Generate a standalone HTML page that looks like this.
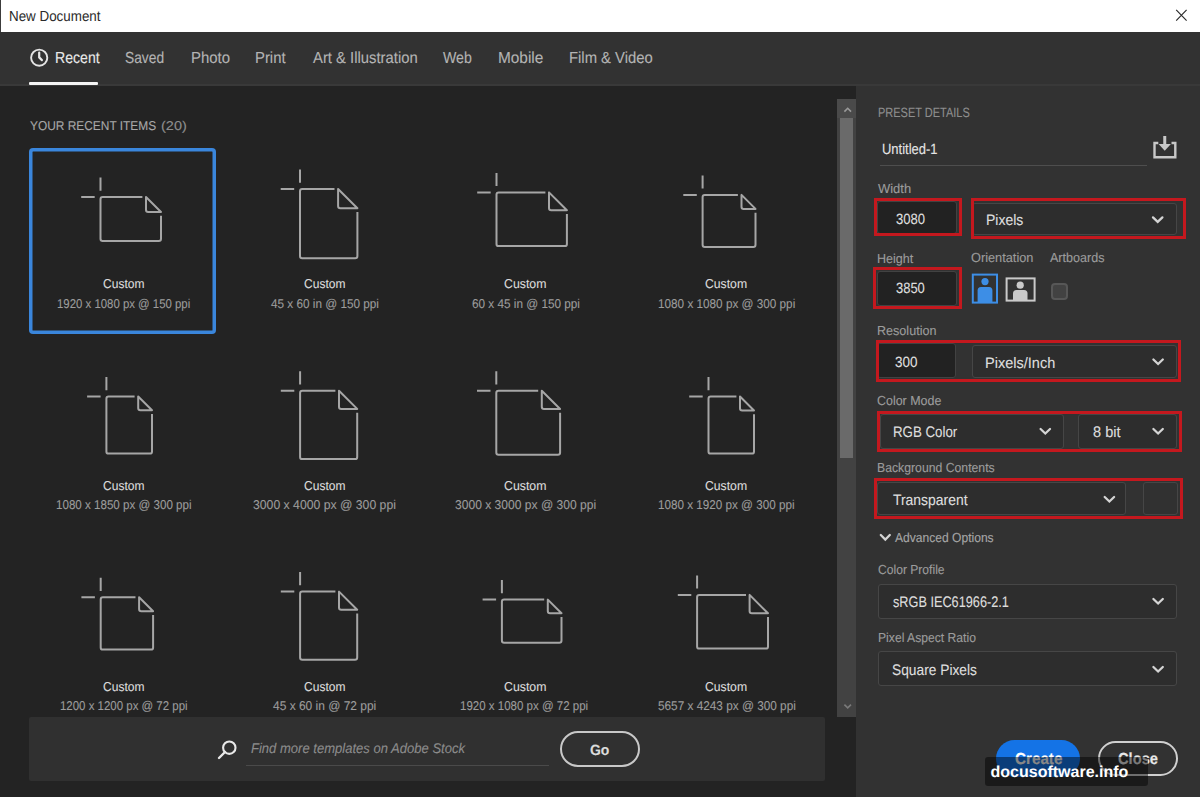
<!DOCTYPE html>
<html><head><meta charset="utf-8"><style>
html,body{margin:0;padding:0;width:1200px;height:797px;overflow:hidden;background:#232323;}
body{position:relative;font-family:"Liberation Sans",sans-serif;}
.t{position:absolute;white-space:nowrap;transform-origin:0 0;text-rendering:geometricPrecision;-webkit-text-stroke:0.12px currentColor;}
.bm{display:inline-block;width:0;height:0;vertical-align:baseline;}
.r{position:absolute;}
.s{position:absolute;overflow:visible;}
</style></head><body>
<div class="r" style="left:0.00px;top:0.00px;width:1200.00px;height:32.00px;background:#ffffff;"></div>
<div class="r" style="left:0.00px;top:0.00px;width:1.00px;height:32.00px;background:#3c3c3c;"></div>
<div class="t" style="left:9.03px;top:9.51px;font-size:14.53px;line-height:14.53px;color:#2a2a2a;font-weight:normal;font-style:normal;transform:scaleX(0.9224);-webkit-text-stroke:0;">New Document</div>
<svg class="s" style="left:1170px;top:4px" width="22" height="22" viewBox="1170 4 22 22"><path d="M1176.2 9.9 L1186.6 20.6 M1186.6 9.9 L1176.2 20.6" stroke="#2a2a2a" stroke-width="1.15" fill="none"/></svg>
<div class="r" style="left:0.00px;top:32.00px;width:1200.00px;height:52.00px;background:#323232;"></div>
<div class="r" style="left:0.00px;top:84.00px;width:1200.00px;height:2.00px;background:#393939;"></div>
<div class="r" style="left:29.00px;top:82.00px;width:68.80px;height:3.00px;background:#f4f4f4;border-radius:1px;"></div>
<svg class="s" style="left:28px;top:46px" width="22" height="22" viewBox="28 46 22 22"><circle cx="39.2" cy="57.7" r="8.1" stroke="#e4e4e4" stroke-width="1.9" fill="none"/><path d="M39.2 52.6 V57.4 L41.9 60.1" stroke="#e8e8e8" stroke-width="2.2" stroke-linecap="round" stroke-linejoin="round" fill="none"/></svg>
<div class="t" style="left:54.87px;top:51.11px;font-size:15.99px;line-height:15.99px;color:#e8e8e8;font-weight:normal;font-style:normal;transform:scaleX(0.8813);">Recent</div>
<div class="t" style="left:124.98px;top:51.11px;font-size:15.99px;line-height:15.99px;color:#b4b4b4;font-weight:normal;font-style:normal;transform:scaleX(0.8630);">Saved</div>
<div class="t" style="left:190.80px;top:51.11px;font-size:15.99px;line-height:15.99px;color:#b4b4b4;font-weight:normal;font-style:normal;transform:scaleX(0.9344);">Photo</div>
<div class="t" style="left:255.01px;top:51.11px;font-size:15.99px;line-height:15.99px;color:#b4b4b4;font-weight:normal;font-style:normal;transform:scaleX(0.9302);">Print</div>
<div class="t" style="left:312.50px;top:51.11px;font-size:15.99px;line-height:15.99px;color:#b4b4b4;font-weight:normal;font-style:normal;transform:scaleX(0.9279);">Art &amp; Illustration</div>
<div class="t" style="left:442.93px;top:51.11px;font-size:15.99px;line-height:15.99px;color:#b4b4b4;font-weight:normal;font-style:normal;transform:scaleX(0.8863);">Web</div>
<div class="t" style="left:497.97px;top:51.11px;font-size:15.99px;line-height:15.99px;color:#b4b4b4;font-weight:normal;font-style:normal;transform:scaleX(0.9626);">Mobile</div>
<div class="t" style="left:568.81px;top:51.11px;font-size:15.99px;line-height:15.99px;color:#b4b4b4;font-weight:normal;font-style:normal;transform:scaleX(0.9274);">Film &amp; Video</div>
<div class="r" style="left:0.00px;top:86.00px;width:856.00px;height:711.00px;background:#232323;"></div>
<div class="t" style="left:29.90px;top:119.61px;font-size:12.79px;line-height:12.79px;color:#a8a8a8;font-weight:normal;font-style:normal;transform:scaleX(0.9319);">YOUR RECENT ITEMS</div>
<div class="t" style="left:161.33px;top:119.60px;font-size:12.80px;line-height:12.80px;color:#8e8e8e;font-weight:normal;font-style:normal;transform:scaleX(1.1329);">(20)</div>
<div class="r" style="left:29.30px;top:148.10px;width:186.70px;height:186.20px;border-radius:4px;box-shadow:inset 0 0 0 3.5px #3a86dc;"></div>
<svg class="s" style="left:0;top:0" width="856" height="797"><g stroke="#a6a6a6" stroke-width="2" fill="none" stroke-linejoin="round"><path d="M100.5 177.5 V190.7 M81.2 197.0 H94.7 M142.4 197.0 H102.7 Q100.5 197.0 100.5 199.2 V238.8 Q100.5 241.0 102.7 241.0 H158.8 Q161.0 241.0 161.0 238.8 V215.8 M146.0 197.0 V209.8 Q146.0 212.0 148.2 212.0 H161.0 Z"/><path d="M300.0 169.5 V182.7 M280.7 189.0 H294.2 M334.5 189.0 H302.2 Q300.0 189.0 300.0 191.2 V256.1 Q300.0 258.3 302.2 258.3 H355.2 Q357.4 258.3 357.4 256.1 V212.1 M338.1 189.0 V206.1 Q338.1 208.3 340.3 208.3 H357.4 Z"/><path d="M496.5 172.9 V186.1 M477.2 192.4 H490.7 M545.4 192.4 H498.7 Q496.5 192.4 496.5 194.6 V243.9 Q496.5 246.1 498.7 246.1 H564.7 Q566.9 246.1 566.9 243.9 V214.1 M549.0 192.4 V208.1 Q549.0 210.3 551.2 210.3 H566.9 Z"/><path d="M702.6 175.4 V188.6 M683.3 194.9 H696.8 M737.9 194.9 H704.8 Q702.6 194.9 702.6 197.1 V244.7 Q702.6 246.9 704.8 246.9 H753.3 Q755.5 246.9 755.5 244.7 V212.7 M741.5 194.9 V206.7 Q741.5 208.9 743.7 208.9 H755.5 Z"/><path d="M106.4 377.0 V390.2 M87.1 396.5 H100.6 M134.6 396.5 H108.6 Q106.4 396.5 106.4 398.7 V451.4 Q106.4 453.6 108.6 453.6 H149.8 Q152.0 453.6 152.0 451.4 V414.1 M138.2 396.5 V408.1 Q138.2 410.3 140.4 410.3 H152.0 Z"/><path d="M300.1 371.2 V384.4 M280.8 390.7 H294.3 M335.4 390.7 H302.3 Q300.1 390.7 300.1 392.9 V456.9 Q300.1 459.1 302.3 459.1 H355.0 Q357.2 459.1 357.2 456.9 V412.7 M339.0 390.7 V406.7 Q339.0 408.9 341.2 408.9 H357.2 Z"/><path d="M496.3 371.2 V384.4 M477.0 390.7 H490.5 M538.2 390.7 H498.5 Q496.3 390.7 496.3 392.9 V452.5 Q496.3 454.7 498.5 454.7 H557.9 Q560.1 454.7 560.1 452.5 V412.8 M541.8 390.7 V406.8 Q541.8 409.0 544.0 409.0 H560.1 Z"/><path d="M708.5 377.0 V390.2 M689.2 396.5 H702.7 M736.4 396.5 H710.7 Q708.5 396.5 708.5 398.7 V451.4 Q708.5 453.6 710.7 453.6 H751.8 Q754.0 453.6 754.0 451.4 V414.3 M740.0 396.5 V408.3 Q740.0 410.5 742.2 410.5 H754.0 Z"/><path d="M100.7 577.8 V591.0 M81.4 597.3 H94.9 M135.5 597.3 H102.9 Q100.7 597.3 100.7 599.5 V647.4 Q100.7 649.6 102.9 649.6 H150.9 Q153.1 649.6 153.1 647.4 V615.1 M139.1 597.3 V609.1 Q139.1 611.3 141.3 611.3 H153.1 Z"/><path d="M300.1 572.1 V585.3 M280.8 591.6 H294.3 M335.4 591.6 H302.3 Q300.1 591.6 300.1 593.8 V657.6 Q300.1 659.8 302.3 659.8 H355.0 Q357.2 659.8 357.2 657.6 V613.6 M339.0 591.6 V607.6 Q339.0 609.8 341.2 609.8 H357.2 Z"/><path d="M501.9 580.1 V593.3 M482.6 599.6 H496.1 M544.2 599.6 H504.1 Q501.9 599.6 501.9 601.8 V640.6 Q501.9 642.8 504.1 642.8 H559.3 Q561.5 642.8 561.5 640.6 V617.1 M547.8 599.6 V611.1 Q547.8 613.3 550.0 613.3 H561.5 Z"/><path d="M697.1 575.4 V588.6 M677.8 594.9 H691.3 M746.0 594.9 H699.3 Q697.1 594.9 697.1 597.1 V646.4 Q697.1 648.6 699.3 648.6 H765.8 Q768.0 648.6 768.0 646.4 V617.1 M749.6 594.9 V611.1 Q749.6 613.3 751.8 613.3 H768.0 Z"/></g></svg>
<div class="t" style="left:102.90px;top:278.20px;font-size:12.79px;line-height:12.79px;color:#dcdcdc;font-weight:normal;font-style:normal;transform:scaleX(0.9415);">Custom</div>
<div class="t" style="left:56.54px;top:298.31px;font-size:12.79px;line-height:12.79px;color:#9c9c9c;font-weight:normal;font-style:normal;transform:scaleX(0.8915);">1920 x 1080 px @ 150 ppi</div>
<div class="t" style="left:303.90px;top:278.20px;font-size:12.79px;line-height:12.79px;color:#dcdcdc;font-weight:normal;font-style:normal;transform:scaleX(0.9415);">Custom</div>
<div class="t" style="left:270.56px;top:298.31px;font-size:12.79px;line-height:12.79px;color:#9c9c9c;font-weight:normal;font-style:normal;transform:scaleX(0.9193);">45 x 60 in @ 150 ppi</div>
<div class="t" style="left:503.98px;top:278.20px;font-size:12.79px;line-height:12.79px;color:#dcdcdc;font-weight:normal;font-style:normal;transform:scaleX(0.9626);">Custom</div>
<div class="t" style="left:471.71px;top:298.31px;font-size:12.79px;line-height:12.79px;color:#9c9c9c;font-weight:normal;font-style:normal;transform:scaleX(0.9189);">60 x 45 in @ 150 ppi</div>
<div class="t" style="left:704.99px;top:278.20px;font-size:12.79px;line-height:12.79px;color:#dcdcdc;font-weight:normal;font-style:normal;transform:scaleX(0.9556);">Custom</div>
<div class="t" style="left:658.02px;top:298.31px;font-size:12.79px;line-height:12.79px;color:#9c9c9c;font-weight:normal;font-style:normal;transform:scaleX(0.9186);">1080 x 1080 px @ 300 ppi</div>
<div class="t" style="left:102.90px;top:480.00px;font-size:12.79px;line-height:12.79px;color:#dcdcdc;font-weight:normal;font-style:normal;transform:scaleX(0.9415);">Custom</div>
<div class="t" style="left:55.73px;top:499.31px;font-size:12.79px;line-height:12.79px;color:#9c9c9c;font-weight:normal;font-style:normal;transform:scaleX(0.9070);">1080 x 1850 px @ 300 ppi</div>
<div class="t" style="left:303.90px;top:480.00px;font-size:12.79px;line-height:12.79px;color:#dcdcdc;font-weight:normal;font-style:normal;transform:scaleX(0.9415);">Custom</div>
<div class="t" style="left:253.41px;top:499.31px;font-size:12.79px;line-height:12.79px;color:#9c9c9c;font-weight:normal;font-style:normal;transform:scaleX(0.9563);">3000 x 4000 px @ 300 ppi</div>
<div class="t" style="left:503.98px;top:480.00px;font-size:12.79px;line-height:12.79px;color:#dcdcdc;font-weight:normal;font-style:normal;transform:scaleX(0.9626);">Custom</div>
<div class="t" style="left:455.12px;top:499.31px;font-size:12.79px;line-height:12.79px;color:#9c9c9c;font-weight:normal;font-style:normal;transform:scaleX(0.9448);">3000 x 3000 px @ 300 ppi</div>
<div class="t" style="left:704.99px;top:480.00px;font-size:12.79px;line-height:12.79px;color:#dcdcdc;font-weight:normal;font-style:normal;transform:scaleX(0.9556);">Custom</div>
<div class="t" style="left:658.02px;top:499.31px;font-size:12.79px;line-height:12.79px;color:#9c9c9c;font-weight:normal;font-style:normal;transform:scaleX(0.9138);">1080 x 1920 px @ 300 ppi</div>
<div class="t" style="left:102.90px;top:680.50px;font-size:12.79px;line-height:12.79px;color:#dcdcdc;font-weight:normal;font-style:normal;transform:scaleX(0.9415);">Custom</div>
<div class="t" style="left:59.74px;top:700.11px;font-size:12.79px;line-height:12.79px;color:#9c9c9c;font-weight:normal;font-style:normal;transform:scaleX(0.8964);">1200 x 1200 px @ 72 ppi</div>
<div class="t" style="left:303.90px;top:680.50px;font-size:12.79px;line-height:12.79px;color:#dcdcdc;font-weight:normal;font-style:normal;transform:scaleX(0.9415);">Custom</div>
<div class="t" style="left:273.06px;top:700.11px;font-size:12.79px;line-height:12.79px;color:#9c9c9c;font-weight:normal;font-style:normal;transform:scaleX(0.9360);">45 x 60 in @ 72 ppi</div>
<div class="t" style="left:503.98px;top:680.50px;font-size:12.79px;line-height:12.79px;color:#dcdcdc;font-weight:normal;font-style:normal;transform:scaleX(0.9626);">Custom</div>
<div class="t" style="left:460.44px;top:700.11px;font-size:12.79px;line-height:12.79px;color:#9c9c9c;font-weight:normal;font-style:normal;transform:scaleX(0.9006);">1920 x 1080 px @ 72 ppi</div>
<div class="t" style="left:704.99px;top:680.50px;font-size:12.79px;line-height:12.79px;color:#dcdcdc;font-weight:normal;font-style:normal;transform:scaleX(0.9556);">Custom</div>
<div class="t" style="left:658.43px;top:700.11px;font-size:12.79px;line-height:12.79px;color:#9c9c9c;font-weight:normal;font-style:normal;transform:scaleX(0.9225);">5657 x 4243 px @ 300 ppi</div>
<div class="r" style="left:837.30px;top:99.40px;width:18.70px;height:617.60px;background:#424242;"></div>
<div class="r" style="left:837.30px;top:99.40px;width:18.70px;height:18.60px;background:#4a4a4a;"></div>
<div class="r" style="left:840.00px;top:118.40px;width:12.60px;height:339.60px;background:#6a6a6a;"></div>
<svg class="s" style="left:837px;top:99px" width="19" height="619" viewBox="837 99 19 619"><path d="M844.4 111.6 L847.7 108.3 L851 111.6" stroke="#9a9a9a" stroke-width="1.6" fill="none"/><path d="M844.4 704.6 L847.7 707.9 L851 704.6" stroke="#7a7a7a" stroke-width="1.6" fill="none"/></svg>
<div class="r" style="left:29.20px;top:717.00px;width:796.30px;height:63.50px;background:#303030;border-radius:2px;"></div>
<svg class="s" style="left:210px;top:735px" width="30" height="30" viewBox="210 735 30 30"><circle cx="229.3" cy="747.7" r="6.2" stroke="#e8e8e8" stroke-width="2.1" fill="none"/><path d="M225 752 L219 758" stroke="#e8e8e8" stroke-width="2.4" stroke-linecap="round"/></svg>
<div class="t" style="left:250.51px;top:741.41px;font-size:14.10px;line-height:14.10px;color:#8c8c8c;font-weight:normal;font-style:italic;transform:scaleX(0.9250);">Find more templates on Adobe Stock</div>
<div class="r" style="left:246.00px;top:765.30px;width:302.80px;height:1.20px;background:#4a4a4a;"></div>
<div class="r" style="left:559.60px;top:731.20px;width:80.20px;height:35.60px;border:2.4px solid #c8c8c8;border-radius:18px;box-sizing:border-box;"></div>
<div class="t" style="left:590.04px;top:743.72px;font-size:14.83px;line-height:14.83px;color:#dcdcdc;font-weight:bold;font-style:normal;transform:scaleX(0.9423);">Go</div>
<div class="r" style="left:856.00px;top:86.00px;width:344.00px;height:711.00px;background:#323232;"></div>
<div class="t" style="left:877.52px;top:106.01px;font-size:13.52px;line-height:13.52px;color:#8e8e8e;font-weight:normal;font-style:normal;transform:scaleX(0.8126);">PRESET DETAILS</div>
<div class="t" style="left:881.63px;top:143.00px;font-size:14.97px;line-height:14.97px;color:#e4e4e4;font-weight:normal;font-style:normal;transform:scaleX(0.8671);">Untitled-1</div>
<div class="r" style="left:879.80px;top:165.30px;width:266.90px;height:1.20px;background:#4e4e4e;"></div>
<svg class="s" style="left:1150px;top:133px" width="30" height="30" viewBox="1150 133 30 30"><path d="M1158.3 143 H1154.5 V157.2 H1175.3 V143 H1171.5" stroke="#c8c8c8" stroke-width="2.4" fill="none"/><path d="M1164.75 136 V146" stroke="#c8c8c8" stroke-width="3"/><path d="M1158.6 144 H1170.9 L1164.75 150.8 Z" fill="#c8c8c8"/></svg>
<div class="t" style="left:878.14px;top:181.60px;font-size:13.08px;line-height:13.08px;color:#9c9c9c;font-weight:normal;font-style:normal;transform:scaleX(0.9905);">Width</div>
<div class="t" style="left:877.20px;top:251.50px;font-size:13.08px;line-height:13.08px;color:#9c9c9c;font-weight:normal;font-style:normal;transform:scaleX(0.9593);">Height</div>
<div class="t" style="left:971.03px;top:251.00px;font-size:13.08px;line-height:13.08px;color:#9c9c9c;font-weight:normal;font-style:normal;transform:scaleX(0.9755);">Orientation</div>
<div class="t" style="left:1049.60px;top:251.00px;font-size:13.08px;line-height:13.08px;color:#9c9c9c;font-weight:normal;font-style:normal;transform:scaleX(0.9600);">Artboards</div>
<div class="t" style="left:876.99px;top:324.00px;font-size:13.08px;line-height:13.08px;color:#9c9c9c;font-weight:normal;font-style:normal;transform:scaleX(0.9614);">Resolution</div>
<div class="t" style="left:877.38px;top:393.82px;font-size:13.08px;line-height:13.08px;color:#9c9c9c;font-weight:normal;font-style:normal;transform:scaleX(0.9520);">Color Mode</div>
<div class="t" style="left:877.02px;top:461.00px;font-size:13.08px;line-height:13.08px;color:#9c9c9c;font-weight:normal;font-style:normal;transform:scaleX(0.9358);">Background Contents</div>
<div class="t" style="left:878.00px;top:563.32px;font-size:13.08px;line-height:13.08px;color:#9c9c9c;font-weight:normal;font-style:normal;transform:scaleX(0.9250);">Color Profile</div>
<div class="t" style="left:877.63px;top:630.60px;font-size:13.08px;line-height:13.08px;color:#9c9c9c;font-weight:normal;font-style:normal;transform:scaleX(0.9291);">Pixel Aspect Ratio</div>
<div class="r" style="left:877.30px;top:201.30px;width:79.90px;height:32.50px;border-radius:3px;background:#222222;border:1px solid #424242;box-sizing:border-box;"></div>
<div class="r" style="left:877.00px;top:271.20px;width:80.00px;height:34.60px;border-radius:3px;background:#222222;border:1px solid #424242;box-sizing:border-box;"></div>
<div class="r" style="left:877.00px;top:343.00px;width:78.80px;height:34.70px;border-radius:3px;background:#222222;border:1px solid #424242;box-sizing:border-box;"></div>
<div class="r" style="left:972.00px;top:203.00px;width:205.00px;height:32.00px;border-radius:3px;background:#2d2d2d;border:1px solid #464646;box-sizing:border-box;"></div>
<div class="r" style="left:971.70px;top:344.70px;width:205.30px;height:33.00px;border-radius:3px;background:#2d2d2d;border:1px solid #464646;box-sizing:border-box;"></div>
<div class="r" style="left:880.00px;top:413.90px;width:183.60px;height:34.90px;border-radius:3px;background:#2d2d2d;border:1px solid #464646;box-sizing:border-box;"></div>
<div class="r" style="left:1078.00px;top:413.90px;width:99.20px;height:34.90px;border-radius:3px;background:#2d2d2d;border:1px solid #464646;box-sizing:border-box;"></div>
<div class="r" style="left:877.00px;top:482.00px;width:249.30px;height:33.00px;border-radius:3px;background:#2d2d2d;border:1px solid #464646;box-sizing:border-box;"></div>
<div class="r" style="left:1143.30px;top:482.00px;width:34.70px;height:33.00px;border-radius:3px;background:#313131;border:1px solid #464646;box-sizing:border-box;"></div>
<div class="r" style="left:878.20px;top:583.50px;width:299.00px;height:35.50px;border-radius:3px;background:#2d2d2d;border:1px solid #464646;box-sizing:border-box;"></div>
<div class="r" style="left:878.20px;top:650.70px;width:299.00px;height:35.30px;border-radius:3px;background:#2d2d2d;border:1px solid #464646;box-sizing:border-box;"></div>
<div class="r" style="left:873.80px;top:197.80px;width:88.30px;height:38.70px;border:3px solid #c4181e;box-sizing:border-box;"></div>
<div class="r" style="left:971.00px;top:198.40px;width:214.60px;height:40.60px;border:3px solid #c4181e;box-sizing:border-box;"></div>
<div class="r" style="left:872.90px;top:267.20px;width:89.60px;height:42.20px;border:3px solid #c4181e;box-sizing:border-box;"></div>
<div class="r" style="left:876.00px;top:340.30px;width:305.30px;height:41.30px;border:3px solid #c4181e;box-sizing:border-box;"></div>
<div class="r" style="left:877.40px;top:410.60px;width:304.40px;height:41.80px;border:3px solid #c4181e;box-sizing:border-box;"></div>
<div class="r" style="left:874.00px;top:478.40px;width:308.70px;height:40.40px;border:3px solid #c4181e;box-sizing:border-box;"></div>
<div class="t" style="left:895.78px;top:212.81px;font-size:14.83px;line-height:14.83px;color:#dedede;font-weight:normal;font-style:normal;transform:scaleX(0.8816);">3080</div>
<div class="t" style="left:985.68px;top:213.00px;font-size:15.26px;line-height:15.26px;color:#dedede;font-weight:normal;font-style:normal;transform:scaleX(0.9181);">Pixels</div>
<div class="t" style="left:896.08px;top:282.01px;font-size:14.83px;line-height:14.83px;color:#dedede;font-weight:normal;font-style:normal;transform:scaleX(0.8722);">3850</div>
<div class="t" style="left:895.36px;top:355.72px;font-size:14.83px;line-height:14.83px;color:#dedede;font-weight:normal;font-style:normal;transform:scaleX(0.9078);">300</div>
<div class="t" style="left:985.44px;top:355.82px;font-size:15.26px;line-height:15.26px;color:#dedede;font-weight:normal;font-style:normal;transform:scaleX(0.9528);">Pixels/Inch</div>
<div class="t" style="left:892.84px;top:425.32px;font-size:15.26px;line-height:15.26px;color:#dedede;font-weight:normal;font-style:normal;transform:scaleX(0.8718);">RGB Color</div>
<div class="t" style="left:1092.65px;top:425.32px;font-size:15.26px;line-height:15.26px;color:#dedede;font-weight:normal;font-style:normal;transform:scaleX(0.9534);">8 bit</div>
<div class="t" style="left:893.32px;top:493.00px;font-size:15.26px;line-height:15.26px;color:#dedede;font-weight:normal;font-style:normal;transform:scaleX(0.9130);">Transparent</div>
<div class="t" style="left:892.72px;top:595.32px;font-size:15.26px;line-height:15.26px;color:#dedede;font-weight:normal;font-style:normal;transform:scaleX(0.8335);">sRGB IEC61966-2.1</div>
<div class="t" style="left:892.48px;top:662.60px;font-size:15.26px;line-height:15.26px;color:#dedede;font-weight:normal;font-style:normal;transform:scaleX(0.9027);">Square Pixels</div>
<svg class="s" style="left:0;top:0" width="1200" height="797"><g stroke="#d4d4d4" stroke-width="2.3" fill="none" stroke-linecap="round"><path d="M1153.0 217.4 L1157.7 221.9 L1162.4 217.4"/><path d="M1153.4 359.5 L1158.1 364.0 L1162.8 359.5"/><path d="M1040.6 429.0 L1045.3 433.5 L1050.0 429.0"/><path d="M1153.4 429.0 L1158.1 433.5 L1162.8 429.0"/><path d="M1104.7 497.0 L1109.4 501.5 L1114.1 497.0"/><path d="M1153.4 599.0 L1158.1 603.5 L1162.8 599.0"/><path d="M1153.4 667.0 L1158.1 671.5 L1162.8 667.0"/><path d="M880.8 535 L885.3 539.5 L889.8 535"/></g></svg>
<div class="t" style="left:895.30px;top:530.60px;font-size:13.08px;line-height:13.08px;color:#a6a6a6;font-weight:normal;font-style:normal;transform:scaleX(0.9228);">Advanced Options</div>
<svg class="s" style="left:970px;top:272px" width="70" height="34" viewBox="970 272 70 34">
<rect x="972.8" y="274.6" width="24.2" height="28" stroke="#3d8ee6" stroke-width="2" fill="none"/>
<circle cx="985" cy="281.6" r="3.6" fill="#3d8ee6"/>
<path d="M977.6 302.6 V290.5 Q977.6 287 981 287 H989 Q992.4 287 992.4 290.5 V302.6 Z" fill="#3d8ee6"/>
<rect x="1006.6" y="278.4" width="28" height="22.2" stroke="#cacaca" stroke-width="2" fill="none"/>
<circle cx="1020.2" cy="285.2" r="3.6" fill="#cacaca"/>
<path d="M1013 300.6 V293.5 Q1013 290 1016.5 290 H1024 Q1027.5 290 1027.5 293.5 V300.6 Z" fill="#cacaca"/>
</svg>
<div class="r" style="left:1050.80px;top:282.80px;width:17.00px;height:17.10px;border-radius:4px;background:#424242;border:2px solid #575757;box-sizing:border-box;"></div>
<div class="r" style="left:996.10px;top:739.70px;width:83.80px;height:37.10px;background:#1473e6;border-radius:18.5px;"></div>
<div class="t" style="left:1014.99px;top:751.90px;font-size:15.99px;line-height:15.99px;color:#ffffff;font-weight:bold;font-style:normal;transform:scaleX(0.9521);">Create</div>
<div class="r" style="left:1098.20px;top:740.60px;width:79.40px;height:35.20px;border:2px solid #d0d0d0;border-radius:18px;box-sizing:border-box;"></div>
<div class="t" style="left:1117.61px;top:751.90px;font-size:15.99px;line-height:15.99px;color:#e8e8e8;font-weight:bold;font-style:normal;transform:scaleX(0.9199);">Close</div>
<div class="r" style="left:985.00px;top:757.00px;width:162.70px;height:29.40px;background:rgba(0,0,0,0.47);border-radius:3px;"></div>
<div class="t" style="left:990.56px;top:765.41px;font-size:16.00px;line-height:16.00px;color:#ffffff;font-weight:bold;font-style:normal;-webkit-text-stroke:0;">docusoftware.info</div>
</body></html>
